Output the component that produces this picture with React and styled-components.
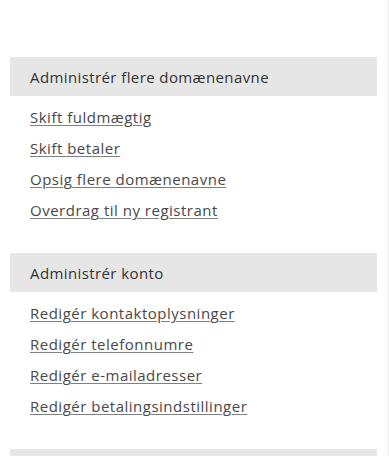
import styled, { createGlobalStyle } from "styled-components";

const GlobalStyle = createGlobalStyle`
  html, body {
    margin: 0;
    padding: 0;
    background: #ffffff;
  }
  body {
    font-family: "Open Sans", "Noto Sans", sans-serif;
  }
`;

const Page = styled.div`
  box-sizing: border-box;
  width: 389px;
  height: 456px;
  padding: 57px 10px 0 10px;
  border-right: 2px solid #f3f3f8;
  overflow: hidden;
`;

const Section = styled.section`
  margin-bottom: 27px;
`;

const Header = styled.div`
  height: 39px;
  display: flex;
  align-items: center;
  padding-left: 20px;
  background: #e6e6e6;
  color: #333333;
  font-size: 15px;
  letter-spacing: 0.4px;
`;

const LinkList = styled.ul`
  list-style: none;
  margin: 0;
  padding: 6px 0 0 20px;
`;

const Item = styled.li`
  height: 31px;
  line-height: 31px;
`;

const Link = styled.a`
  color: #484848;
  font-size: 15px;
  letter-spacing: 0.5px;
  text-decoration: underline;
  text-decoration-color: #808080;
  text-underline-offset: 2px;
  cursor: pointer;
`;

const sections = [
  {
    title: "Administrér flere domænenavne",
    links: [
      "Skift fuldmægtig",
      "Skift betaler",
      "Opsig flere domænenavne",
      "Overdrag til ny registrant",
    ],
  },
  {
    title: "Administrér konto",
    links: [
      "Redigér kontaktoplysninger",
      "Redigér telefonnumre",
      "Redigér e-mailadresser",
      "Redigér betalingsindstillinger",
    ],
  },
  { title: "", links: [] },
];

export default function App() {
  return (
    <>
      <GlobalStyle />
      <Page>
        {sections.map((s, i) => (
          <Section key={i}>
            <Header>{s.title}</Header>
            {s.links.length > 0 && (
              <LinkList>
                {s.links.map((l) => (
                  <Item key={l}>
                    <Link>{l}</Link>
                  </Item>
                ))}
              </LinkList>
            )}
          </Section>
        ))}
      </Page>
    </>
  );
}
